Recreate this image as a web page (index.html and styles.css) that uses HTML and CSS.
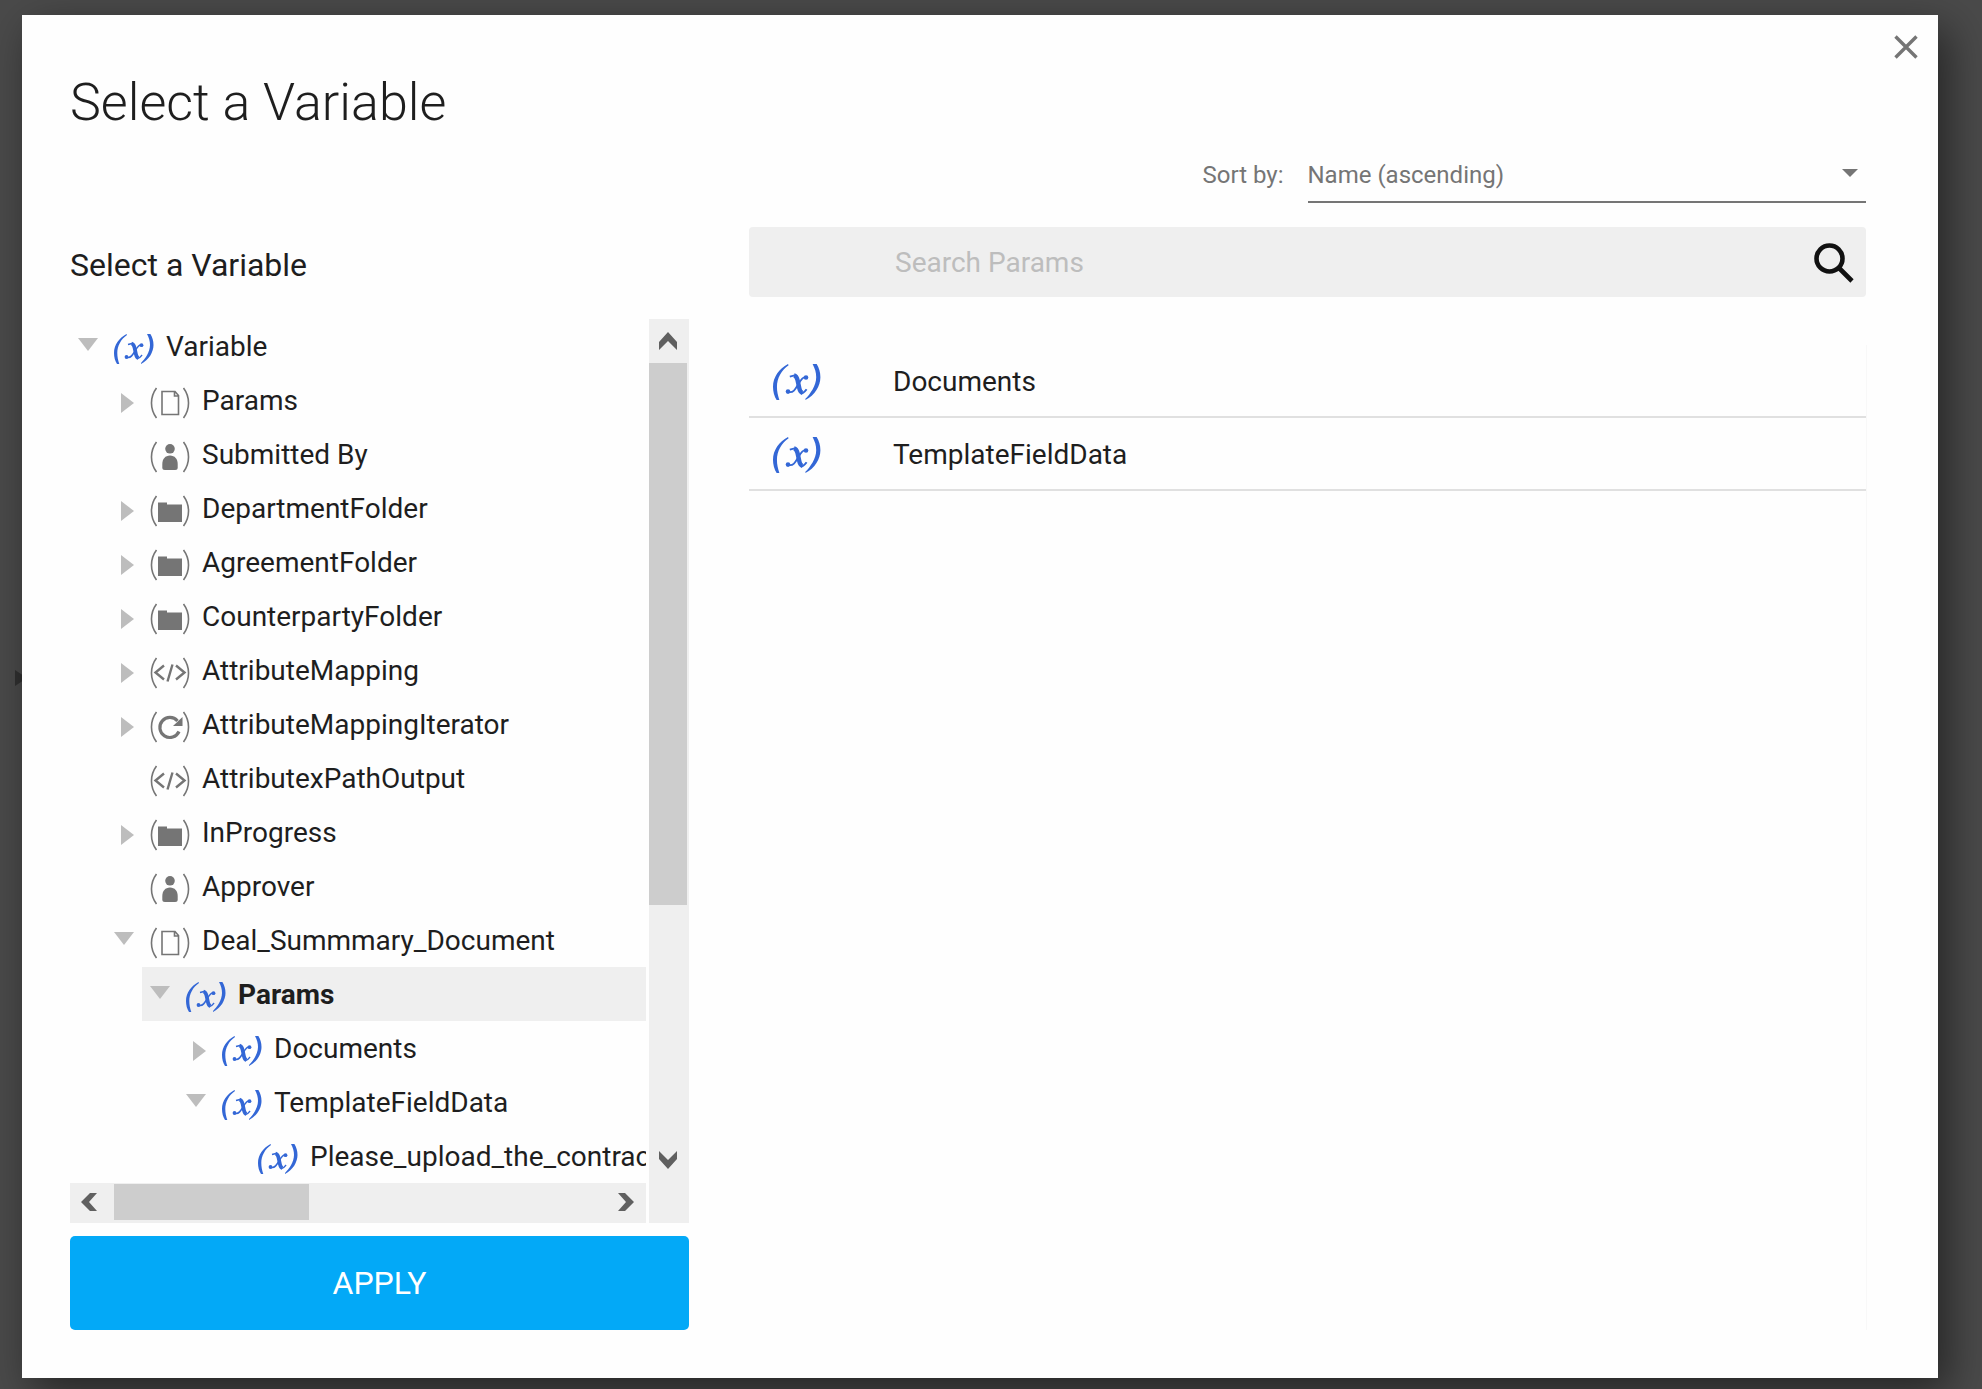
FILE: index.html
```html
<!DOCTYPE html>
<html lang="en">
<head>
<meta charset="utf-8">
<title>Select a Variable</title>
<link rel="stylesheet" href="styles.css">
</head>
<body>
<svg class="sprite" aria-hidden="true">
  <symbol id="i-var" viewBox="0 0 40 30">
    <path fill="currentColor" d="M12.500 0C5 4 0 11 0 19c0 4 1 8 3 11h2.300C4 26 3.300 23 3.300 19c0-7 3.700-14 9.700-18zM33 0c2 4 3 7 3 11 0 7-5 14-9 18v1C35 26 39.500 18 39.500 11c0-4-1.100-8-3.100-11z"/>
    <path fill="none" stroke="currentColor" stroke-width="3.700" d="M17.500 9.500c2 .5 2.500 2 3 4l1.500 7c.5 2.200 1 3 2.500 3.500"/>
    <path fill="none" stroke="currentColor" stroke-width="1.500" d="M14 10.500l4-1M28.500 11.500c-3-2-5.500 2-7.500 5.500s-4.500 8-8.500 6M23.500 24.500c2 0 3-1.500 4.500-3.500"/>
    <circle fill="currentColor" cx="27.500" cy="11.200" r="1.900"/><circle fill="currentColor" cx="12.500" cy="23" r="1.900"/>
  </symbol>
  <symbol id="i-paren" viewBox="0 0 40 32">
    <path fill="none" stroke="currentColor" stroke-width="1.600" d="M6.500 1C-.200 10-.200 22 6.500 31M33.500 1c6.700 9 6.700 21 0 30"/>
  </symbol>
  <symbol id="i-doc" viewBox="0 0 40 32">
    <use href="#i-paren"/>
    <path fill="none" stroke="currentColor" stroke-width="1.600" d="M12 4.500h13l3.500 4V27.500H12zM24.500 4.500V9h4"/>
  </symbol>
  <symbol id="i-user" viewBox="0 0 40 32">
    <use href="#i-paren"/>
    <circle fill="currentColor" cx="20" cy="7.800" r="4.800"/>
    <path fill="currentColor" d="M12.300 23c0-5 3-8.500 7.700-8.500s7.700 3.500 7.700 8.500v3.500q0 2.500-2.500 2.500H14.800q-2.500 0-2.500-2.500z"/>
  </symbol>
  <symbol id="i-folder" viewBox="0 0 40 32">
    <use href="#i-paren"/>
    <path fill="currentColor" d="M8 7.500h9v2h15v17.500H8z"/>
  </symbol>
  <symbol id="i-code" viewBox="0 0 40 32">
    <use href="#i-paren"/>
    <path fill="none" stroke="currentColor" stroke-width="2.400" d="M14 8.500l-8.500 7 8.500 7M26 8.500l8.500 7-8.500 7M22.500 7.500l-5 17"/>
  </symbol>
  <symbol id="i-loop" viewBox="0 0 40 32">
    <use href="#i-paren"/>
    <path fill="none" stroke="currentColor" stroke-width="3.200" d="M29 20.500a10 10 0 1 1-1.500-10.500"/>
    <path fill="currentColor" d="M32.500 6v9H23z"/>
  </symbol>
</svg>

<main class="dialog" role="dialog" aria-labelledby="title">
  <button class="close" type="button" aria-label="Close">
    <svg viewBox="0 0 24 24"><path d="M1.500 1.500l21 21M22.500 1.500l-21 21"/></svg>
  </button>
  <h1 class="title" id="title">Select a Variable</h1>

  <div class="columns">
    <section class="picker">
      <h2 class="subtitle">Select a Variable</h2>
      <div class="scroller">
        <ul class="tree">
          <li class="node l0"><i class="arrow open"></i><svg class="icon var"><use href="#i-var"/></svg><span>Variable</span></li>
          <li class="node l1"><i class="arrow shut"></i><svg class="icon"><use href="#i-doc"/></svg><span>Params</span></li>
          <li class="node l1"><i class="arrow"></i><svg class="icon"><use href="#i-user"/></svg><span>Submitted By</span></li>
          <li class="node l1"><i class="arrow shut"></i><svg class="icon"><use href="#i-folder"/></svg><span>DepartmentFolder</span></li>
          <li class="node l1"><i class="arrow shut"></i><svg class="icon"><use href="#i-folder"/></svg><span>AgreementFolder</span></li>
          <li class="node l1"><i class="arrow shut"></i><svg class="icon"><use href="#i-folder"/></svg><span>CounterpartyFolder</span></li>
          <li class="node l1"><i class="arrow shut"></i><svg class="icon"><use href="#i-code"/></svg><span>AttributeMapping</span></li>
          <li class="node l1"><i class="arrow shut"></i><svg class="icon"><use href="#i-loop"/></svg><span>AttributeMappingIterator</span></li>
          <li class="node l1"><i class="arrow"></i><svg class="icon"><use href="#i-code"/></svg><span>AttributexPathOutput</span></li>
          <li class="node l1"><i class="arrow shut"></i><svg class="icon"><use href="#i-folder"/></svg><span>InProgress</span></li>
          <li class="node l1"><i class="arrow"></i><svg class="icon"><use href="#i-user"/></svg><span>Approver</span></li>
          <li class="node l1"><i class="arrow open"></i><svg class="icon"><use href="#i-doc"/></svg><span>Deal_Summmary_Document</span></li>
          <li class="node l2 selected"><i class="arrow open"></i><svg class="icon var"><use href="#i-var"/></svg><span>Params</span></li>
          <li class="node l3"><i class="arrow shut"></i><svg class="icon var"><use href="#i-var"/></svg><span>Documents</span></li>
          <li class="node l3"><i class="arrow open"></i><svg class="icon var"><use href="#i-var"/></svg><span>TemplateFieldData</span></li>
          <li class="node l4"><i class="arrow"></i><svg class="icon var"><use href="#i-var"/></svg><span>Please_upload_the_contrac</span></li>
        </ul>
        <div class="bar vertical" aria-hidden="true">
          <svg class="step" viewBox="0 0 18 18"><path d="M9 0l9 10v8L9 9l-9 9v-8z"/></svg>
          <div class="track"><div class="thumb"></div></div>
          <svg class="step" viewBox="0 0 18 18"><path d="M9 18l9-10V0L9 9 0 0v8z"/></svg>
        </div>
        <div class="bar horizontal" aria-hidden="true">
          <svg class="step" viewBox="0 0 18 18"><path d="M0 9L9 0h7L8 9l8 9H9z"/></svg>
          <div class="track"><div class="thumb"></div></div>
          <svg class="step" viewBox="0 0 18 18"><path d="M17 9L8 0H1l8 9-8 9h7z"/></svg>
        </div>
      </div>
      <button class="apply" type="button">APPLY</button>
    </section>

    <section class="results">
      <div class="sort">
        <label for="sort">Sort by:</label>
        <div class="select">
          <select id="sort"><option>Name (ascending)</option></select>
        </div>
      </div>
      <div class="search">
        <input type="search" aria-label="Search Params" placeholder="Search Params">
        <svg class="lens" viewBox="0 0 40 40"><circle cx="15.500" cy="15.500" r="13"/><path d="M25 25l13 13"/></svg>
      </div>
      <ul class="list">
        <li><svg class="icon var"><use href="#i-var"/></svg><span>Documents</span></li>
        <li><svg class="icon var"><use href="#i-var"/></svg><span>TemplateFieldData</span></li>
      </ul>
    </section>
  </div>
</main>
</body>
</html>
```

FILE: styles.css
```css
* {
  box-sizing: border-box;
}

body {
  position: relative;
  display: flex;
  min-height: 100vh;
  margin: 0;
  padding: 15px 44px 11px 22px;
  background: #4a4a4a;
  color: #1e1e1e;
  font: 28px/56px Roboto, sans-serif;
  overflow: hidden;
}

/* connector arrow of the canvas behind the dialog */
body::before {
  content: "";
  position: absolute;
  top: 670px;
  left: 15px;
  border: solid transparent;
  border-width: 8px 0 8px 12px;
  border-left-color: #303030;
}

ul {
  margin: 0;
  padding: 0;
  list-style: none;
}

button,
input,
select {
  margin: 0;
  border: 0;
  padding: 0;
  font: inherit;
}

.sprite {
  position: absolute;
  width: 0;
  height: 0;
}

.dialog {
  position: relative;
  display: flex;
  flex: 1;
  flex-direction: column;
  padding: 48px 72px 48px 48px;
  background: #fefefe;
  box-shadow: 10px 14px 40px rgba(0, 0, 0, 0.5);
}

.close {
  position: absolute;
  top: 20px;
  right: 20px;
  width: 24px;
  height: 24px;
  background: none;
}

.close svg {
  display: block;
  fill: none;
  stroke: #757575;
  stroke-width: 3.400;
}

.title {
  margin: 0;
  font-size: 52px;
  font-weight: 300;
  line-height: 80px;
}

.columns {
  display: flex;
  flex: 1;
  gap: 60px;
}

.picker {
  display: flex;
  flex: 0 0 619px;
  flex-direction: column;
  min-width: 0;
  padding-top: 94px;
}

.subtitle {
  margin: 0 0 26px;
  font-size: 32px;
  font-weight: 400;
  line-height: 56px;
}

.scroller {
  display: grid;
  grid-template-columns: minmax(0, 1fr) 40px;
  grid-template-rows: auto 40px;
  column-gap: 3px;
}

.tree {
  overflow: hidden;
}

.node {
  display: flex;
  height: 54px;
  padding-left: 8px;
  white-space: nowrap;
}

.l1 { margin-left: 36px; }
.l2 { margin-left: 72px; }
.l3 { margin-left: 108px; }
.l4 { margin-left: 144px; }

.selected {
  background: #efefef;
  font-weight: 700;
}

.arrow {
  flex: none;
  width: 20px;
  margin-right: 16px;
}

.arrow.open::before {
  content: "";
  display: block;
  margin-top: 19px;
  border: solid transparent;
  border-width: 13px 10px 0;
  border-top-color: #bdbdbd;
}

.arrow.shut::before {
  content: "";
  display: block;
  width: 0;
  margin: 20px 0 0 7px;
  border: solid transparent;
  border-width: 10px 0 10px 13px;
  border-left-color: #bdbdbd;
}

.icon {
  flex: none;
  width: 40px;
  height: 32px;
  margin: 14px 12px 0 0;
  color: #757575;
}

.icon.var {
  color: #3367d6;
}

.bar {
  display: flex;
  background: #efefef;
}

.vertical {
  grid-row: 1 / 3;
  grid-column: 2;
  flex-direction: column;
  padding: 13px 0 54px;
}

.horizontal {
  align-items: center;
  padding: 0 11px;
}

.step {
  flex: none;
  width: 18px;
  height: 18px;
  fill: #606060;
}

.vertical .step {
  margin-left: 10px;
}

.horizontal .step {
  margin-bottom: 2px;
}

.track {
  flex: 1;
}

.vertical .track {
  margin: 13px 2px 14px 0;
}

.horizontal .track {
  height: 36px;
  margin: 0 16px 2px 15px;
}

.thumb {
  background: #cdcdcd;
}

.vertical .thumb {
  width: 100%;
  height: 70%;
}

.horizontal .thumb {
  width: 40%;
  height: 100%;
}

.apply {
  height: 94px;
  margin-top: 13px;
  border-radius: 5px;
  background: #03a9f7;
  color: #fff;
  font-size: 32px;
}

.results {
  display: flex;
  flex: 1;
  flex-direction: column;
  min-width: 0;
}

.sort {
  display: flex;
  justify-content: flex-end;
  gap: 24px;
  padding-top: 6px;
  color: #757575;
  font-size: 24px;
  line-height: 52px;
}

.select {
  position: relative;
  width: 50%;
  border-bottom: 2px solid #757575;
}

.select::after {
  content: "";
  position: absolute;
  top: 20px;
  right: 8px;
  border: solid transparent;
  border-width: 8px 8px 0;
  border-top-color: #757575;
  pointer-events: none;
}

select {
  display: block;
  width: 100%;
  height: 52px;
  appearance: none;
  background: none;
  color: inherit;
}

.search {
  display: flex;
  align-items: center;
  height: 70px;
  margin: 24px 0 48px;
  padding: 2px 12px 0 146px;
  border-radius: 4px;
  background: #efefef;
}

.search input {
  flex: 1;
  min-width: 0;
  background: none;
}

.search input::placeholder {
  color: #bdbdbd;
  opacity: 1;
}

.lens {
  width: 40px;
  height: 40px;
  fill: none;
  stroke: #111;
  stroke-width: 4.600;
}

.list {
  flex: 1;
  margin-right: -1px;
  border-right: 1px solid #f8f8f8;
}

.list li {
  display: flex;
  align-items: center;
  height: 73px;
  padding: 2px 0 0 24px;
  border-bottom: 2px solid #e0e0e0;
}

.list .icon {
  width: 48px;
  height: 36px;
  margin: 0 72px 0 0;
}
```
